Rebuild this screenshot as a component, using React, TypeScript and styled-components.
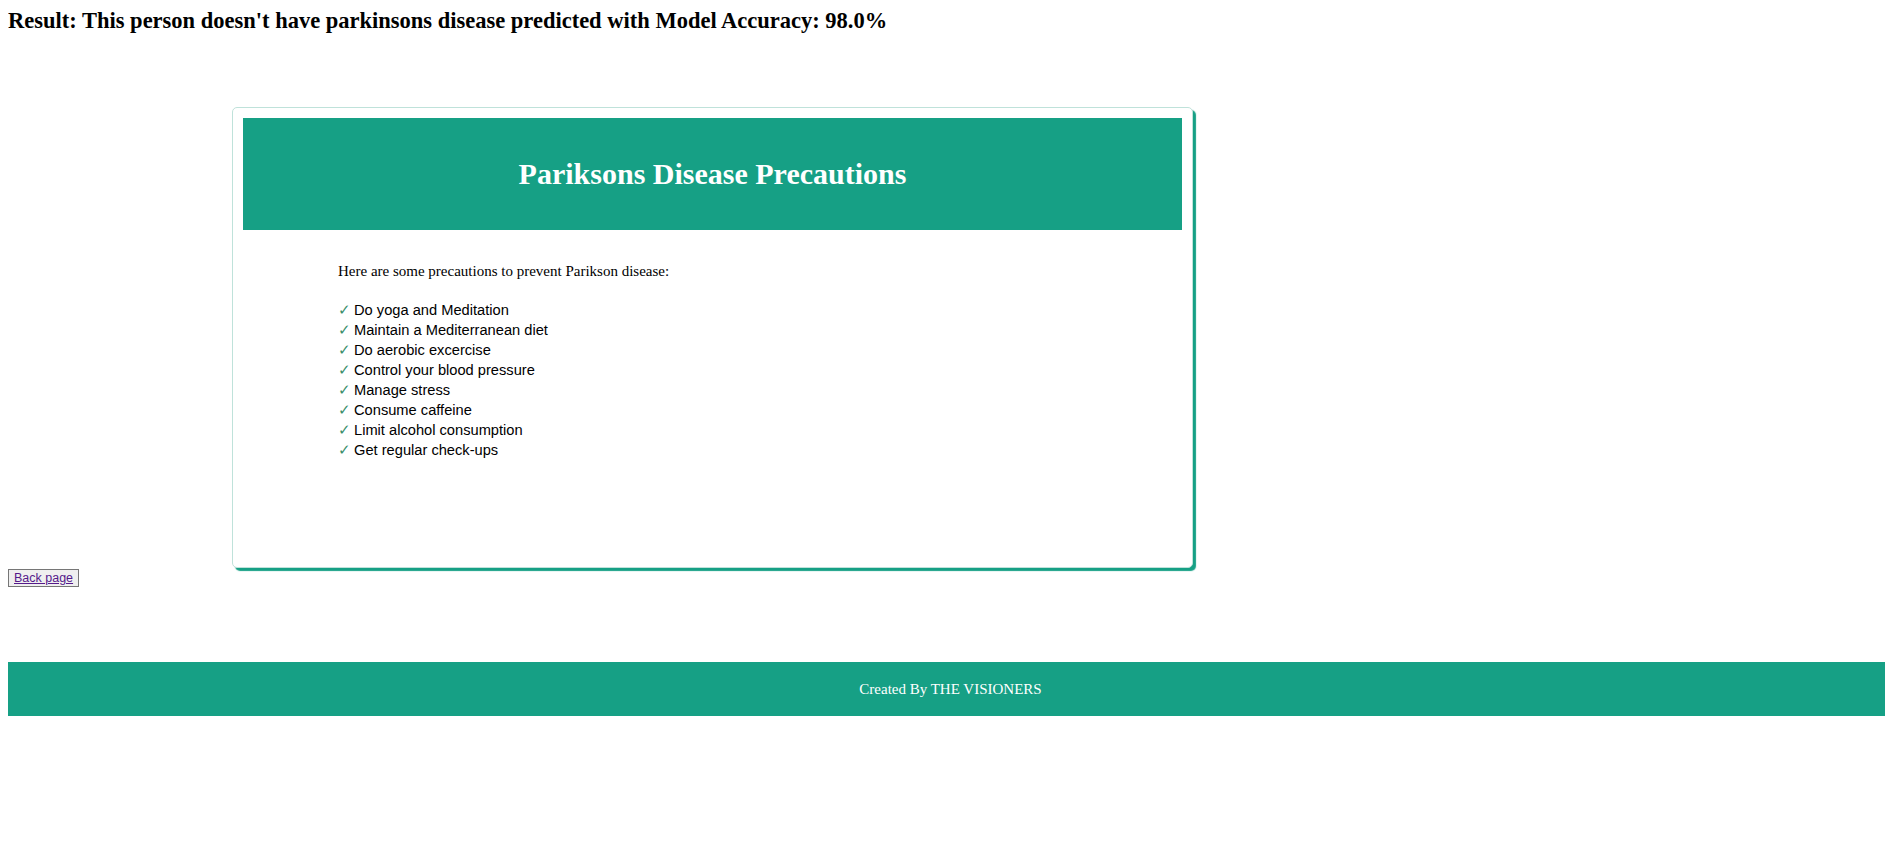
import React from "react";
import styled, { createGlobalStyle } from "styled-components";

const GlobalStyle = createGlobalStyle`
    body {
      margin: 8px;
      background: #fff;
      font-family: "Liberation Serif", "Times New Roman", serif;
      color: #000;
    }
`;

const Page = styled.div`
    display: flex;
    flex-direction: column;
    align-items: flex-start;
`;

const Result = styled.h3`
    margin: 0;
    font-size: 22.5px;
    font-weight: bold;
    line-height: 26px;
`;

const Card = styled.div`
    box-sizing: border-box;
    width: 961px;
    height: 461px;
    margin: 73px 0 0 224px;
    padding: 10px;
    border: 1px solid #bfe2da;
    border-radius: 5px;
    box-shadow: 3px 3px 1px #16a085;
    background: #fff;
`;

const CardHeader = styled.div`
    display: flex;
    align-items: center;
    justify-content: center;
    height: 112px;
    background: #16a085;
`;

const CardTitle = styled.h1`
    margin: 0;
    color: #fff;
    font-size: 30px;
    font-weight: bold;
`;

const CardBody = styled.div`
    padding: 33px 0 0 95px;
`;

const Intro = styled.p`
    margin: 0 0 20px;
    font-size: 15px;
    line-height: 17px;
`;

const List = styled.ul`
    margin: 0;
    padding: 0;
    list-style: none;
    font-family: "Liberation Sans", Arial, sans-serif;
    font-size: 14.67px;
    line-height: 20px;
`;

const Item = styled.li`
    display: flex;
    gap: 3px;
`;

const Check = styled.span`
    color: #3a8f6c;
`;

const BackButton = styled.button`
    margin-top: 1px;
    padding: 0 5px;
    height: 18px;
    background: #efefef;
    border: 1px solid #767676;
    border-radius: 0;
    font-family: "Liberation Sans", Arial, sans-serif;
    font-size: 12.5px;
    line-height: 16px;
`;

const BackLink = styled.a`
    color: #551a8b;
    text-decoration: underline;
`;

const Footer = styled.footer`
    box-sizing: border-box;
    width: calc(100% + 8px);
    height: 54px;
    margin-top: 75px;
    display: flex;
    align-items: center;
    justify-content: center;
    background: #16a085;
    color: #fff;
    font-size: 15px;
`;

const precautions = [
    "Do yoga and Meditation",
    "Maintain a Mediterranean diet",
    "Do aerobic excercise",
    "Control your blood pressure",
    "Manage stress",
    "Consume caffeine",
    "Limit alcohol consumption",
    "Get regular check-ups",
];

const App = () => {
    return (
        <Page>
            <GlobalStyle />
            <Result>Result: This person doesn't have parkinsons disease predicted with Model Accuracy: 98.0%</Result>
            <Card>
                <CardHeader>
                    <CardTitle>Pariksons Disease Precautions</CardTitle>
                </CardHeader>
                <CardBody>
                    <Intro>Here are some precautions to prevent Parikson disease:</Intro>
                    <List>
                        {precautions.map((p) => (
                            <Item key={p}>
                                <Check>✓</Check>
                                <span>{p}</span>
                            </Item>
                        ))}
                    </List>
                </CardBody>
            </Card>
            <BackButton>
                <BackLink href="#/">Back page</BackLink>
            </BackButton>
            <Footer>Created By THE VISIONERS</Footer>
        </Page>
    );
};

export default App;
